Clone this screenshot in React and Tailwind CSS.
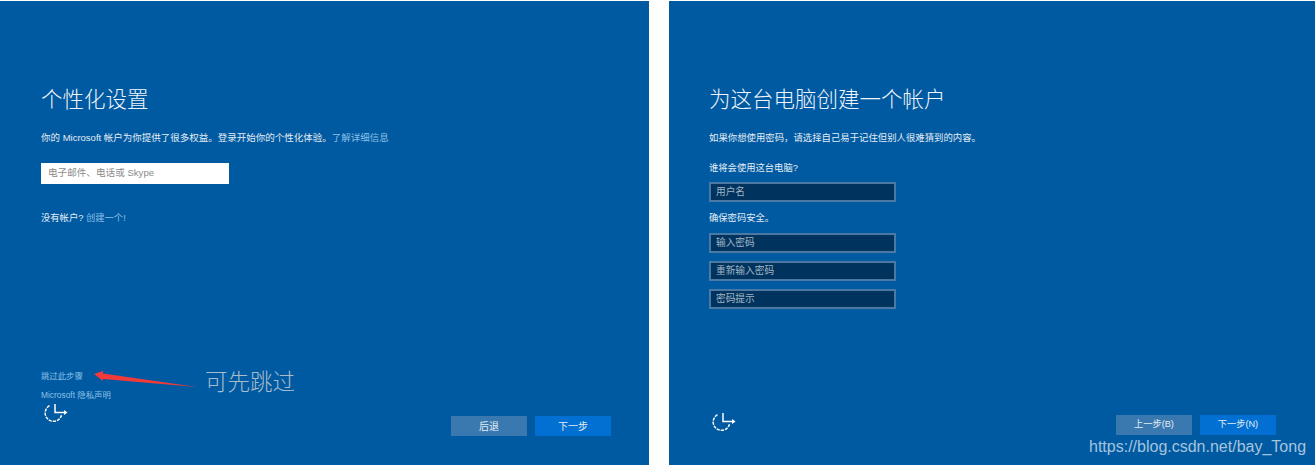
const cjk = "font-['Liberation_Sans','Noto_Sans_CJK_SC',sans-serif]";

function AccessIcon() {
  return (
    <svg width="24" height="22" viewBox="0 0 24 22" fill="none" stroke="#fff" strokeWidth="1.5">
      <path d="M5.500 2.700A8.320 8.320 0 1 0 17.500 12.300" strokeDasharray="3.200 1" />
      <path d="M11 1v8.500h10" />
      <path d="M20 7l3.500 2.500-3.500 2.500z" fill="#fff" stroke="none" />
    </svg>
  );
}

function DarkField({ label }) {
  return (
    <div className="w-[187px] h-[20px] border-2 border-[#4a7aa3] bg-[#00345f] pl-[5px] flex items-center text-[9.7px] text-[#a3b4c4]">
      {label}
    </div>
  );
}

function StepButton({ label, primary }) {
  return (
    <button
      className={`w-[76px] h-[20px] text-[#e4edf5] ${label.length > 3 ? "text-[9.2px]" : "text-[10px]"} ${
        primary ? "bg-[#0170d2]" : "bg-[#3a79af]"
      }`}
    >
      {label}
    </button>
  );
}

export default function App() {
  return (
    <div className={`relative w-[1315px] h-[466px] bg-white overflow-hidden flex gap-[20px] pt-px pb-px ${cjk}`}>
      <section className="w-[649px] bg-[#005aa1] flex flex-col pl-[41px] pr-[38px] pt-[84px] pb-[29px] text-white">
        <h1 className="text-[21.5px] leading-[30px] font-light text-[#eef4f9]">个性化设置</h1>
        <p className="mt-[16px] text-[9.5px] leading-[14px] text-[#e4edf5]">
          你的 Microsoft 帐户为你提供了很多权益。登录开始你的个性化体验。
          <span className="text-[#8cc0e6]">了解详细信息</span>
        </p>
        <div className="mt-[18px] w-[188px] h-[21px] bg-white pl-[7px] flex items-center text-[9.6px] text-[#8a8a8a]">
          电子邮件、电话或 Skype
        </div>
        <p className="mt-[27px] text-[9.3px] leading-[14px] text-[#e4edf5]">
          没有帐户? <span className="text-[#8cc0e6]">创建一个!</span>
        </p>
        <div className="mt-auto flex items-end justify-between">
          <div className="flex flex-col mb-[11px]">
            <span className="text-[8.4px] leading-[14px] text-[#8cc0e6]">跳过此步骤</span>
            <span className="mt-[5px] text-[8.4px] leading-[14px] text-[#8cc0e6]">Microsoft 隐私声明</span>
            <div className="mt-px ml-[3px]">
              <AccessIcon />
            </div>
          </div>
          <div className="flex gap-[8px]">
            <StepButton label="后退" />
            <StepButton label="下一步" primary />
          </div>
        </div>
      </section>

      <section className="flex-1 bg-[#005aa1] flex flex-col pl-[40px] pr-[39px] pt-[84px] pb-[30px] text-white">
        <h1 className="text-[21.5px] leading-[30px] font-light text-[#eef4f9]">为这台电脑创建一个帐户</h1>
        <p className="mt-[16px] text-[9.4px] leading-[14px] text-[#e4edf5]">
          如果你想使用密码，请选择自己易于记住但别人很难猜到的内容。
        </p>
        <p className="mt-[16px] text-[9.3px] leading-[14px] text-[#e4edf5]">谁将会使用这台电脑?</p>
        <div className="mt-[7px]">
          <DarkField label="用户名" />
        </div>
        <p className="mt-[9px] text-[9.3px] leading-[14px] text-[#e4edf5]">确保密码安全。</p>
        <div className="mt-[8px] flex flex-col gap-[8px]">
          <DarkField label="输入密码" />
          <DarkField label="重新输入密码" />
          <DarkField label="密码提示" />
        </div>
        <div className="mt-auto flex items-end justify-between">
          <div className="ml-[3px] mb-px">
            <AccessIcon />
          </div>
          <div className="flex gap-[8px]">
            <StepButton label="上一步(B)" />
            <StepButton label="下一步(N)" primary />
          </div>
        </div>
      </section>

      {/* annotation pasted over the screenshot */}
      <svg className="absolute left-[92px] top-[368px]" width="106" height="22" viewBox="0 0 106 22">
        <path d="M2 6L11 3v2.500L105 19 11 11v2z" fill="#f23a3a" />
      </svg>
      <span className="absolute left-[205px] top-[364px] text-[22.5px] leading-[32px] text-[#a9bccb] font-['Noto_Sans_CJK_SC',sans-serif] font-light">
        可先跳过
      </span>
      <span className="absolute left-[1089px] top-[437px] text-[16px] leading-[20px] text-[#a5c4de] font-['Liberation_Sans',sans-serif]">
        https://blog.csdn.net/bay_Tong
      </span>
    </div>
  );
}
